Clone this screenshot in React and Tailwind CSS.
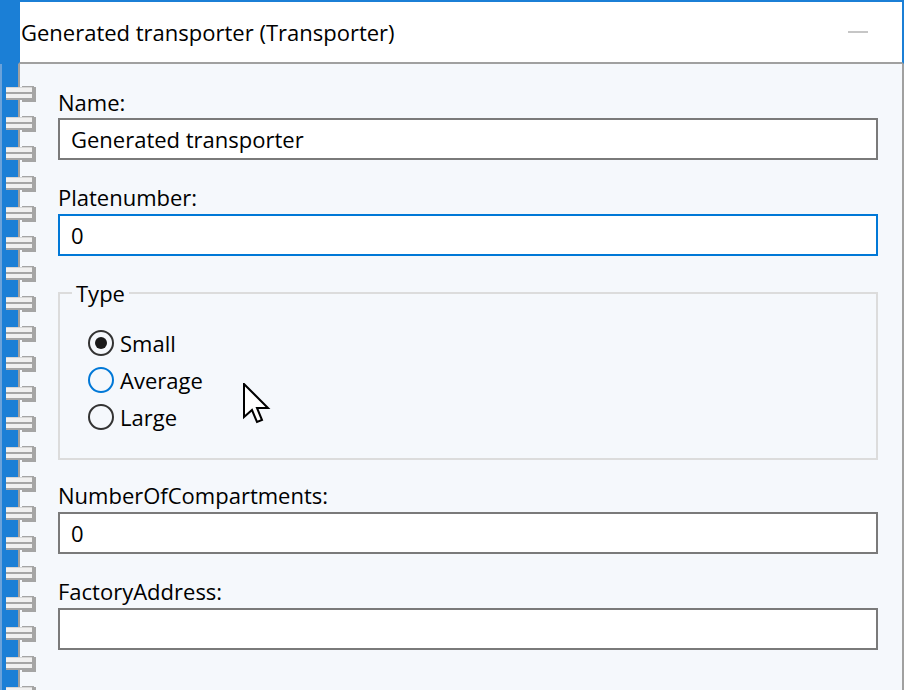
import React from "react";

const FONT = { fontFamily: '"Open Sans", "Noto Sans", sans-serif' };

function Ring() {
  return (
    <svg width="30" height="16" viewBox="0 0 30 16" className="block">
      <rect x="16" y="0" width="12" height="1" fill="#a5a5a5" />
      <rect x="26" y="1" width="4" height="15" fill="#a5a5a5" />
      <rect x="16" y="14" width="14" height="2" fill="#a5a5a5" />
      <rect x="0" y="1" width="26" height="1" fill="#d6d6d6" />
      <rect x="0" y="2" width="26" height="4" fill="#f0f0f0" />
      <rect x="0" y="6" width="27" height="2" fill="#a5a5a5" />
      <rect x="0" y="8" width="26" height="4" fill="#f0f0f0" />
      <rect x="0" y="12" width="27" height="2" fill="#a5a5a5" />
    </svg>
  );
}

function Field({ label, value, focused, className, gap = "mt-[3px]" }) {
  return (
    <div className={className}>
      <div className="h-[28px] leading-[28px] text-black">{label}</div>
      <div
        className={
          gap +
          " h-[42px] border-2 bg-white pl-[11px] leading-[38px] text-black " +
          (focused ? "border-[#0078d7]" : "border-[#7a7a7a]")
        }
      >
        {value}
      </div>
    </div>
  );
}

function Radio({ label, checked, hover }) {
  return (
    <div className="flex h-[37px] items-center">
      <div
        className={
          "flex h-[26px] w-[26px] items-center justify-center rounded-full border-2 " +
          (hover ? "border-[#0078d7]" : "border-[#333333]")
        }
      >
        {checked && <div className="h-[12px] w-[12px] rounded-full bg-[#1a1a1a]" />}
      </div>
      <span className="ml-[6px] leading-[28px] text-black">{label}</span>
    </div>
  );
}

export default function App() {
  const rings = Array.from({ length: 21 });
  return (
    <div
      className="relative flex h-[690px] w-[904px] overflow-hidden bg-[#f5f8fc] text-[22px]"
      style={FONT}
    >
      {/* binder strip */}
      <div className="w-[18px] shrink-0 bg-[#1b7fd6]" />

      <div className="flex min-w-0 flex-1 flex-col">
        {/* title bar */}
        <div className="flex h-[64px] shrink-0 items-center justify-between border-x-2 border-t-2 border-b-2 border-x-[#1b7fd6] border-t-[#1b7fd6] border-b-[#a0a0a0] bg-white">
          <span className="pl-px leading-[28px] text-black">Generated transporter (Transporter)</span>
          <div className="mr-[34px] h-[2px] w-[20px] bg-[#c6c6c6]" />
        </div>

        {/* content */}
        <div className="flex flex-1 flex-col border-x-2 border-[#a0a0a0] pl-[38px] pr-[24px] pt-[24px]">
          <Field label="Name:" value="Generated transporter" gap="mt-[2px]" />
          <Field className="mt-[23px]" label="Platenumber:" value="0" focused />

          <fieldset className="mt-[23px] border-2 border-[#dcdcdc] p-0">
            <legend className="ml-[12px] px-[4px] leading-[28px] text-black">Type</legend>
            <div className="pl-[28px] pt-[17px] pb-[23px]">
              <Radio label="Small" checked />
              <Radio label="Average" hover />
              <Radio label="Large" />
            </div>
          </fieldset>

          <Field className="mt-[21px]" label="NumberOfCompartments:" value="0" />
          <Field className="mt-[23px]" label="FactoryAddress:" value="" />
        </div>
      </div>

      {/* binder rings overlay */}
      <div className="absolute left-0 top-[64px] bottom-0 w-[2px] bg-[#6aa2da]" />
      <div className="absolute left-[6px] top-[86px] flex flex-col gap-[14px]">
        {rings.map((_, i) => (
          <Ring key={i} />
        ))}
      </div>

      {/* mouse cursor */}
      <svg
        className="absolute left-[243px] top-[383px]"
        width="28"
        height="42"
        viewBox="-1 -1 28 42"
      >
        <path
          d="M0 0 L0 33 L8 26 L13 38 L18 36 L13 24 L24 24 Z"
          fill="#ffffff"
          stroke="#000000"
          strokeWidth="2"
          strokeLinejoin="miter"
        />
      </svg>
    </div>
  );
}
